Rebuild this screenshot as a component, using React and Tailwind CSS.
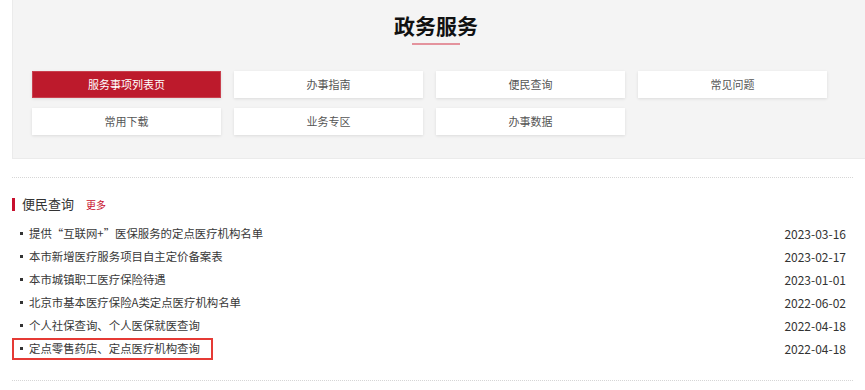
import React from "react";

const services = [
  { label: "服务事项列表页", active: true },
  { label: "办事指南" },
  { label: "便民查询" },
  { label: "常见问题" },
  { label: "常用下载" },
  { label: "业务专区" },
  { label: "办事数据" },
];

const notices = [
  { title: "提供“互联网+”医保服务的定点医疗机构名单", date: "2023-03-16" },
  { title: "本市新增医疗服务项目自主定价备案表", date: "2023-02-17" },
  { title: "本市城镇职工医疗保险待遇", date: "2023-01-01" },
  { title: "北京市基本医疗保险A类定点医疗机构名单", date: "2022-06-02" },
  { title: "个人社保查询、个人医保就医查询", date: "2022-04-18" },
  { title: "定点零售药店、定点医疗机构查询", date: "2022-04-18", marked: true },
];

export default function App() {
  return (
    <div className="min-h-[390px] w-full bg-white font-['Noto_Sans_CJK_SC','Microsoft_YaHei',sans-serif] text-[#333]">
      {/* 政务服务 panel */}
      <section className="ml-[12px] h-[159px] border-l border-b border-[#ebebeb] bg-[#f4f4f4]">
        <div className="pr-[6px]">
          <h2 className="pt-[15px] text-center text-[21px] font-bold leading-[21px] text-[#111]">
            政务服务
          </h2>
          <div className="mx-auto mt-[7px] h-[2px] w-[48px] bg-[#e4939d]" />
        </div>

        <div className="mt-[26px] grid grid-cols-[repeat(4,189px)] gap-x-[13px] gap-y-[10px] pl-[19px]">
          {services.map((item) => (
            <a
              key={item.label}
              href="#"
              className={
                item.active
                  ? "flex h-[27px] items-center justify-center border border-[#c9404e] bg-[#bd1a2c] text-[11px] text-white shadow-[0_1px_3px_rgba(0,0,0,0.1)]"
                  : "flex h-[27px] items-center justify-center bg-white text-[11px] text-[#555] shadow-[0_1px_3px_rgba(0,0,0,0.1)]"
              }
            >
              {item.label}
            </a>
          ))}
        </div>
      </section>

      {/* 便民查询 list */}
      <div className="ml-[12px] mr-[12px] mt-[18px] border-t border-dotted border-[#d6d6d6]">
        <div className="mt-[16px] flex h-[20px] items-center">
          <span className="h-[13px] w-[3px] bg-[#c8102e]" />
          <span className="ml-[7px] text-[13px] text-[#333]">便民查询</span>
          <a href="#" className="ml-[12px] text-[10px] text-[#c8102e]">
            更多
          </a>
        </div>

        <ul className="mt-[8px]">
          {notices.map((n, i) => (
            <li key={i} className="flex h-[23px] items-center justify-between pr-[7px]">
              <a
                href="#"
                className={`flex h-[22px] items-center border-2 pl-[6px] pr-[11px] text-[11.4px] text-[#383838] ${
                  n.marked ? "border-[#e53a35]" : "border-transparent"
                }`}
              >
                <span className="mr-[6px] h-[3px] w-[3px] bg-[#333]" />
                {n.title}
              </a>
              <span className="text-[12px] text-[#333]">{n.date}</span>
            </li>
          ))}
        </ul>

        <div className="mt-[20px] border-t border-dotted border-[#d6d6d6]" />
      </div>
    </div>
  );
}
